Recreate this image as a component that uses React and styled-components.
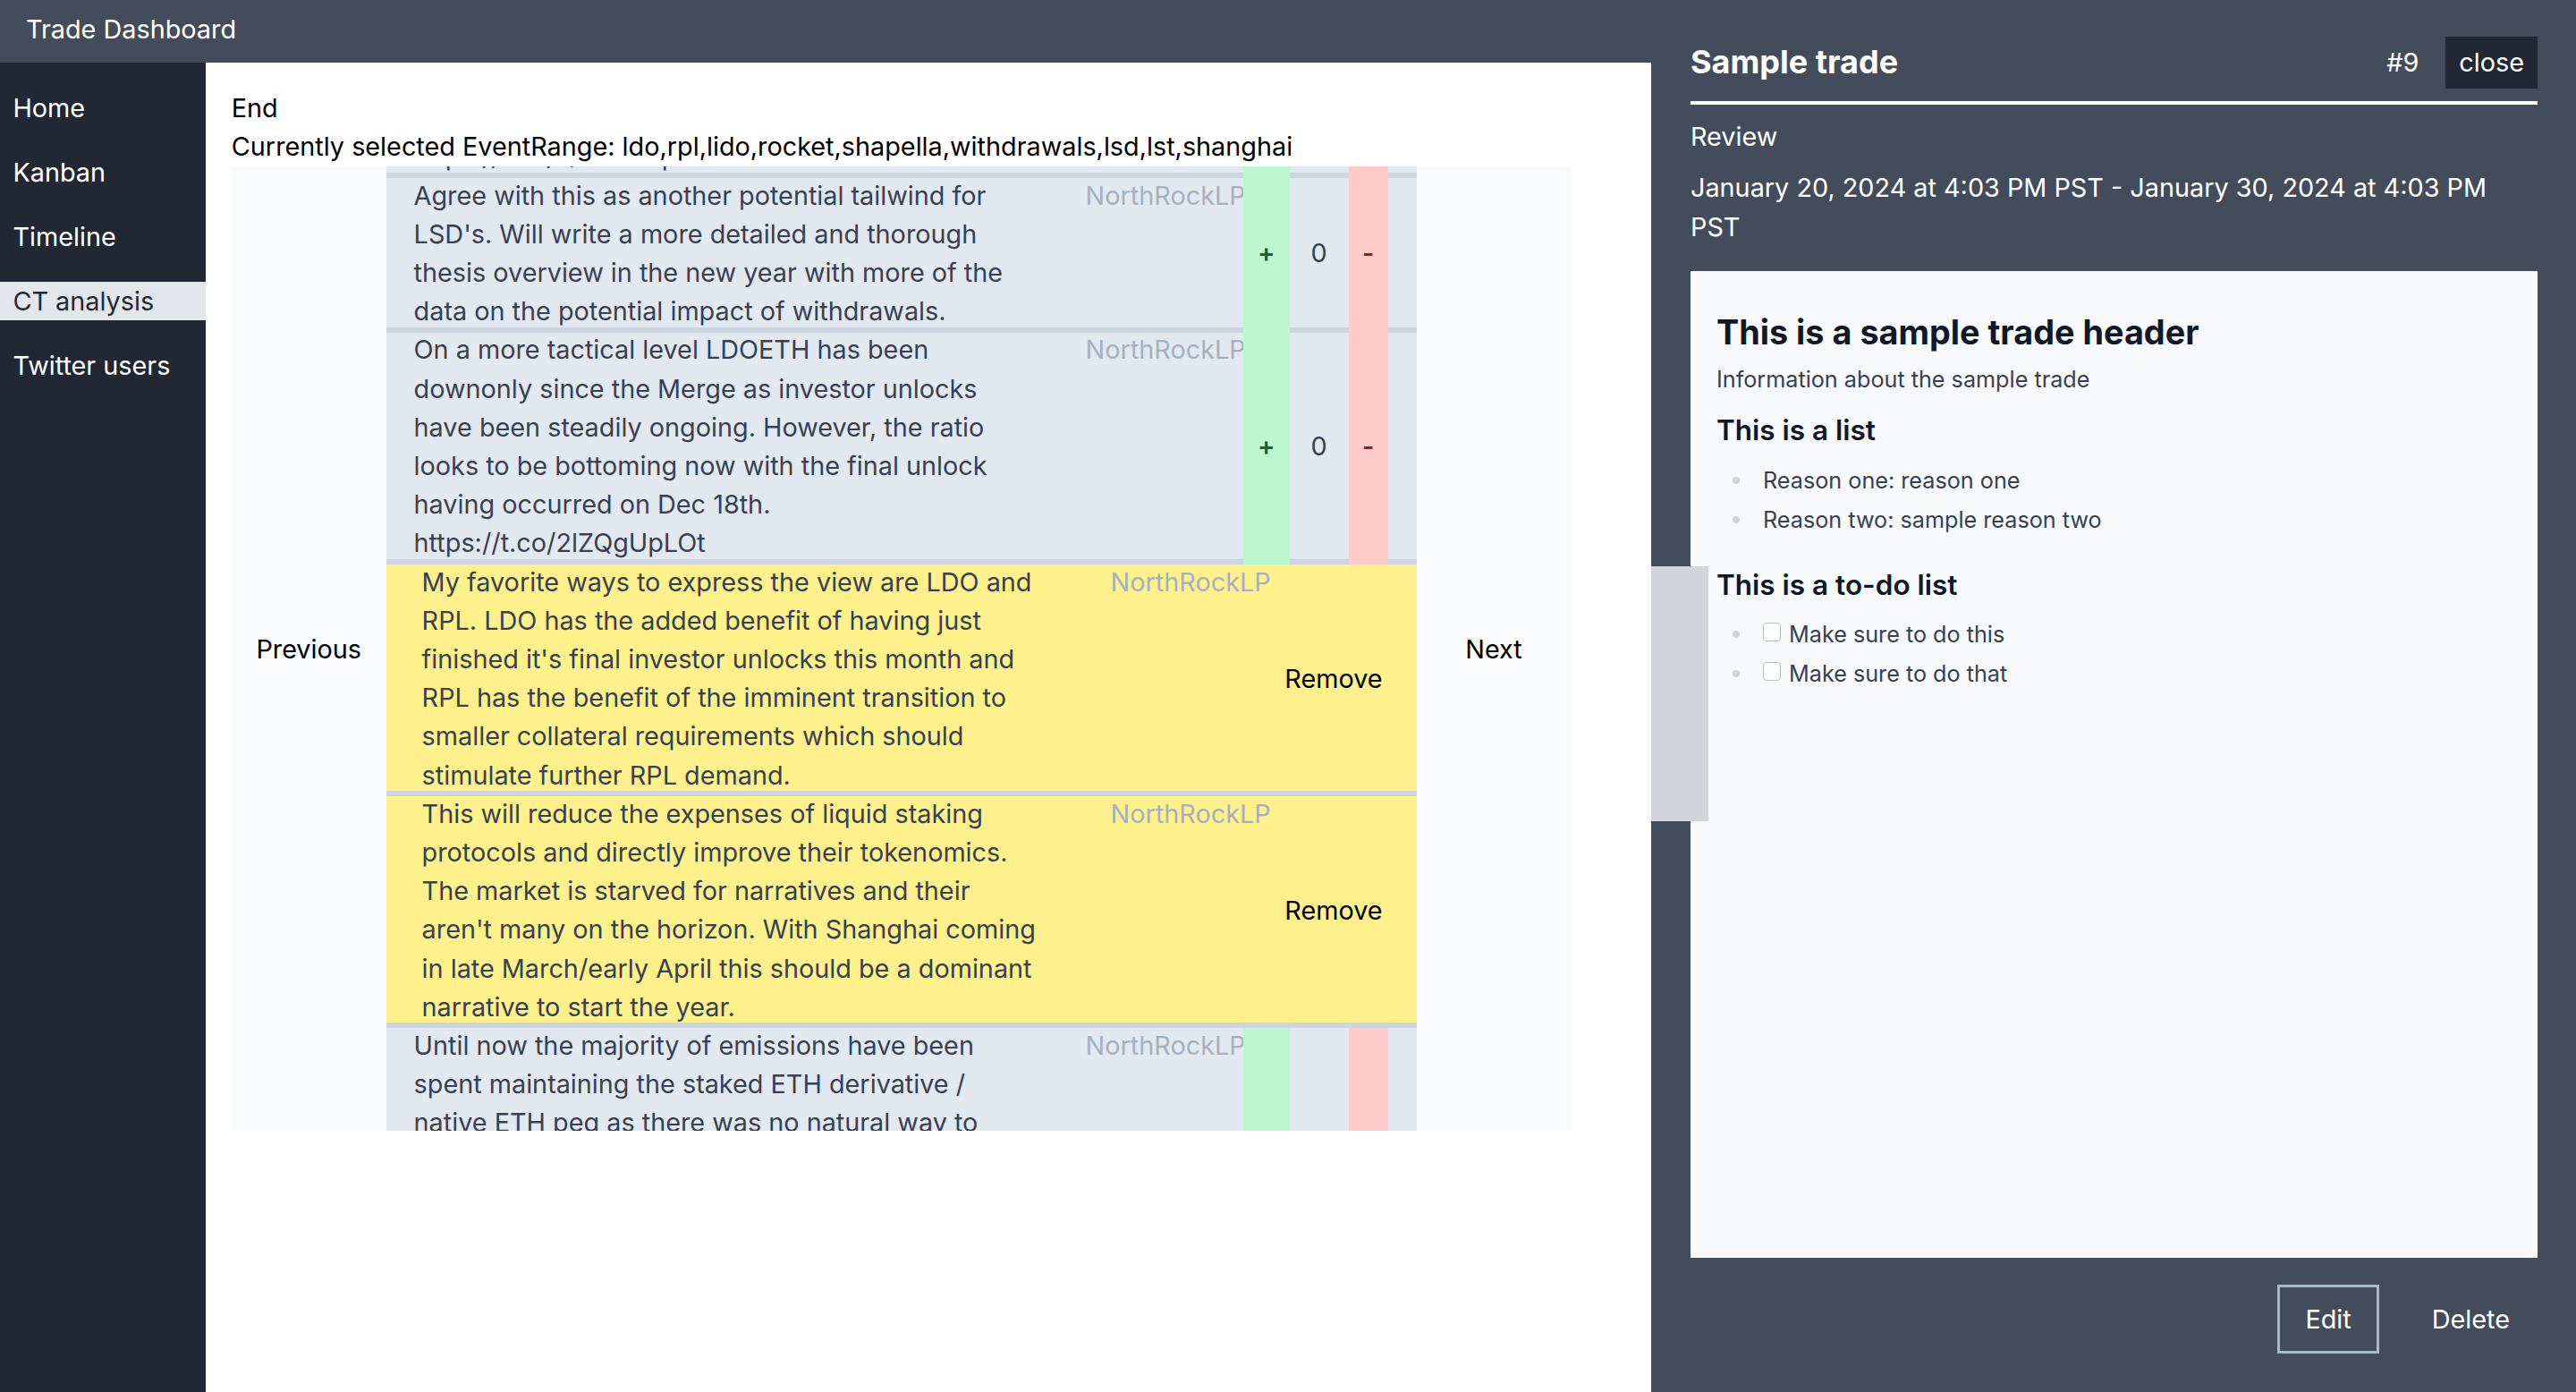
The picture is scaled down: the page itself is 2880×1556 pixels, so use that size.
import React, { useLayoutEffect, useRef } from "react";
import styled, { createGlobalStyle } from "styled-components";

// base styles
const GlobalStyle = createGlobalStyle`
  * { box-sizing: border-box; }
  html, body { margin: 0; padding: 0; height: 100%; }
  body {
    font-family: Inter, "Noto Sans", "Liberation Sans", sans-serif;
    font-size: 28.8px;
    line-height: 43.2px;
    color: #000;
    background: #fff;
  }
`;

const Page = styled.div`
  display: flex;
  flex-direction: column;
  height: 100vh;
  overflow: hidden;
`;

const TopBar = styled.header`
  flex: none;
  height: 70px;
  display: flex;
  align-items: center;
  padding: 0 0 4px 29px;
  background: #434c5b;
  color: #fff;
`;

const Body = styled.div`
  flex: 1;
  display: flex;
  min-height: 0;
`;

const Sidebar = styled.nav`
  flex: none;
  width: 230px;
  display: flex;
  flex-direction: column;
  gap: 28.8px;
  padding-top: 28.8px;
  background: #222833;
`;

const NavItem = styled.a`
  display: block;
  padding-left: 14.4px;
  line-height: 43.2px;
  text-decoration: none;
  color: ${(p) => (p.$active ? "#1f2937" : "#fff")};
  background: ${(p) => (p.$active ? "#e2e5ea" : "transparent")};
`;

const Main = styled.main`
  flex: 1;
  padding: 28.8px;
  background: #fff;
`;

const Carousel = styled.div`
  display: grid;
  grid-template-columns: 172.8px 1152px 172.8px;
  width: 1497.6px;
  height: 1078px;
  margin-top: 1px;
  background: #f8fafc;
`;

const SideControl = styled.div`
  display: flex;
  align-items: center;
  justify-content: center;
  cursor: pointer;
`;

const List = styled.div`
  position: relative;
  height: 100%;
  overflow: hidden;
`;

const Row = styled.div`
  display: grid;
  grid-template-columns: ${(p) =>
    p.$picked ? "810px 178px 1fr" : "782px 176px 52px 66px 44px 1fr"};
  margin-top: -6px;
  border-top: 6px solid #cbd5e1;
  background: ${(p) => (p.$picked ? "#fef08a" : "#e2e8f0")};
  color: #374151;
`;

// text sits a little high in its row, tucked under the divider
const Tweet = styled.div`
  position: relative;
  top: -2.5px;
  padding-left: ${(p) => (p.$picked ? 40 : 31)}px;
  padding-right: ${(p) => (p.$picked ? 73 : 65)}px;
`;

const Author = styled.div`
  position: relative;
  top: -2.5px;
  color: #a3b1c2;
  white-space: nowrap;
  overflow: hidden;
`;

const Vote = styled.div`
  display: flex;
  align-items: center;
  justify-content: center;
  padding-bottom: 5px;
  background: ${(p) => p.$bg || "transparent"};
  color: ${(p) => p.$fg};
  font-weight: ${(p) => (p.$bold ? 600 : 400)};
`;

const RemoveCell = styled.div`
  display: flex;
  align-items: center;
  justify-content: flex-end;
  padding: 0 38px 5px 0;
  color: #000;
`;

const Drawer = styled.aside`
  position: fixed;
  top: 0;
  right: 0;
  bottom: 0;
  z-index: 1;
  width: 1034px;
  display: flex;
  flex-direction: column;
  padding: 41px 43px 43px 44px;
  background: #434c5b;
  color: #fff;
`;

const DrawerHead = styled.div`
  display: flex;
  align-items: center;
  height: 58px;
`;

const DrawerTitle = styled.h2`
  flex: 1;
  margin: 0;
  font-size: 36px;
  line-height: 43.2px;
  font-weight: 700;
`;

const TradeNo = styled.span`
  margin-right: 30px;
`;

const CloseButton = styled.button`
  height: 58px;
  padding: 0 15px;
  border: 0;
  background: #222833;
  color: #fff;
  font: inherit;
`;

const Rule = styled.hr`
  height: 3.6px;
  margin: 14px 0 0;
  border: 0;
  background: #fff;
`;

const DrawerText = styled.div`
  margin-top: ${(p) => p.$gap}px;
  max-width: 930px;
`;

const Card = styled.section`
  flex: 1;
  margin-top: 28px;
  padding: 28.8px 29px;
  background: #f8f9fb;
  color: #111827;
`;

const CardTitle = styled.h1`
  margin: 18px 0 0;
  font-size: 37.8px;
  line-height: 43.2px;
  font-weight: 700;
`;

const CardLead = styled.p`
  margin: 13px 0 0;
  font-size: 25.2px;
  line-height: 36px;
  color: #374151;
`;

const CardHeading = styled.h3`
  margin: ${(p) => p.$gap}px 0 0;
  font-size: 31.5px;
  line-height: 43.2px;
  font-weight: 600;
`;

const Bullets = styled.ul`
  list-style: none;
  margin: 12.5px 0 0;
  padding: 0;
`;

const Bullet = styled.li`
  display: flex;
  align-items: center;
  padding-left: 18px;
  font-size: 25.2px;
  line-height: 44px;
  color: #374151;

  &::before {
    content: "";
    flex: none;
    width: 8px;
    height: 8px;
    margin-right: 26px;
    border-radius: 50%;
    background: #d1d5db;
  }
`;

const Check = styled.input`
  appearance: none;
  position: relative;
  top: -3px;
  width: 20px;
  height: 21px;
  margin: 0 9px 0 0;
  border: 1.8px solid #b9bec6;
  border-radius: 4px;
  background: #fff;
`;

const Footer = styled.div`
  display: flex;
  justify-content: flex-end;
  gap: 28px;
  margin-top: 30px;
`;

const FooterButton = styled.button`
  height: 77px;
  padding: 0 28px;
  border: 3.6px solid ${(p) => (p.$outlined ? "#a9b8c9" : "transparent")};
  background: transparent;
  color: #fff;
  font: inherit;
`;

const EdgeTab = styled.div`
  position: fixed;
  left: 1846px;
  top: 633px;
  z-index: 2;
  width: 64px;
  height: 285px;
  background: #d1d5db;
`;

const navItems = ["Home", "Kanban", "Timeline", "CT analysis", "Twitter users"];

const tweets = [
  {
    text: "Shapella is the single biggest catalyst for the liquid staking sector this year and the market is still underpricing it going into staking https://t.co/Qm8vK2pLxR",
  },
  {
    text: "Agree with this as another potential tailwind for LSD's. Will write a more detailed and thorough thesis overview in the new year with more of the data on the potential impact of withdrawals.",
  },
  {
    text: "On a more tactical level LDOETH has been downonly since the Merge as investor unlocks have been steadily ongoing. However, the ratio looks to be bottoming now with the final unlock having occurred on Dec 18th. https://t.co/2lZQgUpLOt",
  },
  {
    picked: true,
    text: "My favorite ways to express the view are LDO and RPL. LDO has the added benefit of having just finished it's final investor unlocks this month and RPL has the benefit of the imminent transition to smaller collateral requirements which should stimulate further RPL demand.",
  },
  {
    picked: true,
    text: "This will reduce the expenses of liquid staking protocols and directly improve their tokenomics. The market is starved for narratives and their aren't many on the horizon. With Shanghai coming in late March/early April this should be a dominant narrative to start the year.",
  },
  {
    text: "Until now the majority of emissions have been spent maintaining the staked ETH derivative / native ETH peg as there was no natural way to redeem stETH for ETH. Once withdrawals are enabled that capital can instead be directed towards growing market share and node operator incentives, which should drive a meaningful improvement in protocol revenue.",
  },
];

function TweetRow({ tweet }) {
  return (
    <Row $picked={tweet.picked}>
      <Tweet $picked={tweet.picked}>{tweet.text}</Tweet>
      <Author>NorthRockLP</Author>
      {tweet.picked ? (
        <RemoveCell>Remove</RemoveCell>
      ) : (
        <>
          <Vote $bg="#bbf7d0" $fg="#166534" $bold>+</Vote>
          <Vote $fg="#374151">0</Vote>
          <Vote $bg="#fecaca" $fg="#991b1b" $bold>-</Vote>
          <div />
        </>
      )}
    </Row>
  );
}

export default function App() {
  const listRef = useRef(null);

  // keep the list scrolled to the second tweet
  useLayoutEffect(() => {
    const list = listRef.current;
    if (list && list.children[1]) {
      list.scrollTop = list.children[1].offsetTop - 7;
    }
  }, []);

  return (
    <Page>
      <GlobalStyle />
      <TopBar>Trade Dashboard</TopBar>
      <Body>
        <Sidebar>
          {navItems.map((item) => (
            <NavItem key={item} $active={item === "CT analysis"}>
              {item}
            </NavItem>
          ))}
        </Sidebar>
        <Main>
          <div>End</div>
          <div>
            Currently selected EventRange:
            ldo,rpl,lido,rocket,shapella,withdrawals,lsd,lst,shanghai
          </div>
          <Carousel>
            <SideControl>Previous</SideControl>
            <List ref={listRef}>
              {tweets.map((tweet, index) => (
                <TweetRow key={index} tweet={tweet} />
              ))}
            </List>
            <SideControl>Next</SideControl>
          </Carousel>
        </Main>
      </Body>

      <Drawer>
        <DrawerHead>
          <DrawerTitle>Sample trade</DrawerTitle>
          <TradeNo>#9</TradeNo>
          <CloseButton>close</CloseButton>
        </DrawerHead>
        <Rule />
        <DrawerText $gap={14.8}>Review</DrawerText>
        <DrawerText $gap={13.8}>
          January 20, 2024 at 4:03 PM PST - January 30, 2024 at 4:03 PM PST
        </DrawerText>
        <Card>
          <CardTitle>This is a sample trade header</CardTitle>
          <CardLead>Information about the sample trade</CardLead>
          <CardHeading $gap={17.5}>This is a list</CardHeading>
          <Bullets>
            <Bullet>Reason one: reason one</Bullet>
            <Bullet>Reason two: sample reason two</Bullet>
          </Bullets>
          <CardHeading $gap={28.5}>This is a to-do list</CardHeading>
          <Bullets>
            <Bullet>
              <Check type="checkbox" readOnly />
              Make sure to do this
            </Bullet>
            <Bullet>
              <Check type="checkbox" readOnly />
              Make sure to do that
            </Bullet>
          </Bullets>
        </Card>
        <Footer>
          <FooterButton $outlined>Edit</FooterButton>
          <FooterButton>Delete</FooterButton>
        </Footer>
      </Drawer>
      <EdgeTab />
    </Page>
  );
}
